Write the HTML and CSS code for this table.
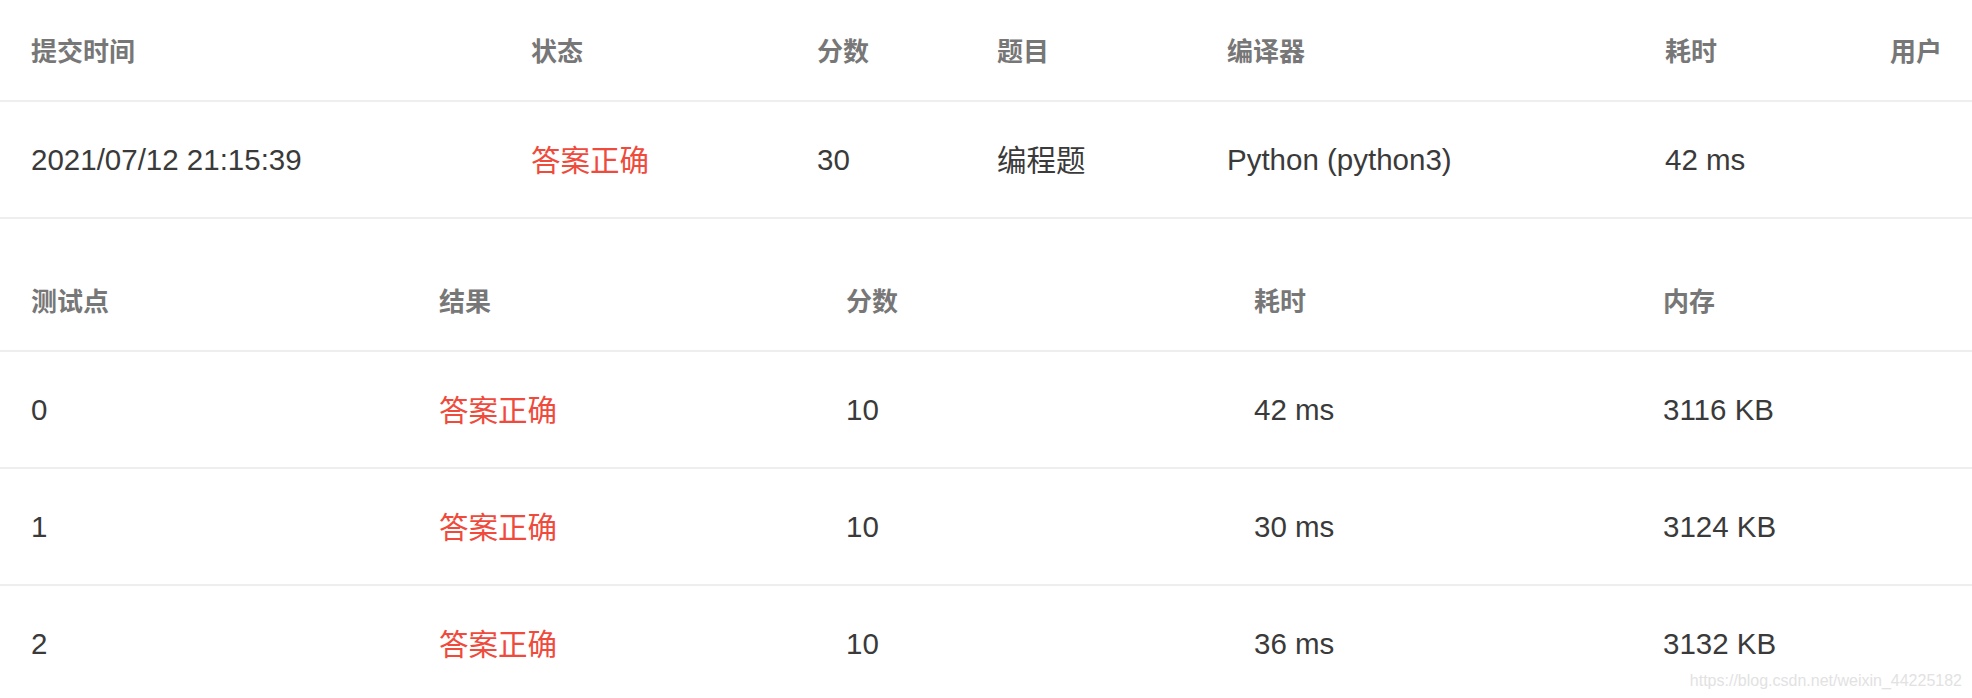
FILE: index.html
```html
<!DOCTYPE html>
<html lang="zh-CN">
<head>
<meta charset="utf-8">
<title>提交详情</title>
<link rel="stylesheet" href="styles.css">
</head>
<body>
<div class="page">
  <div class="table summary">
    <div class="row head">
      <div class="cell">提交时间</div>
      <div class="cell">状态</div>
      <div class="cell">分数</div>
      <div class="cell">题目</div>
      <div class="cell">编译器</div>
      <div class="cell">耗时</div>
      <div class="cell">用户</div>
    </div>
    <div class="row body">
      <div class="cell">2021/07/12 21:15:39</div>
      <div class="cell ok">答案正确</div>
      <div class="cell">30</div>
      <div class="cell cjk">编程题</div>
      <div class="cell">Python (python3)</div>
      <div class="cell">42 ms</div>
      <div class="cell"></div>
    </div>
  </div>

  <div class="table cases">
    <div class="row head">
      <div class="cell">测试点</div>
      <div class="cell">结果</div>
      <div class="cell">分数</div>
      <div class="cell">耗时</div>
      <div class="cell">内存</div>
    </div>
    <div class="row body">
      <div class="cell">0</div>
      <div class="cell ok">答案正确</div>
      <div class="cell">10</div>
      <div class="cell">42 ms</div>
      <div class="cell">3116 KB</div>
    </div>
    <div class="row body">
      <div class="cell">1</div>
      <div class="cell ok">答案正确</div>
      <div class="cell">10</div>
      <div class="cell">30 ms</div>
      <div class="cell">3124 KB</div>
    </div>
    <div class="row body">
      <div class="cell">2</div>
      <div class="cell ok">答案正确</div>
      <div class="cell">10</div>
      <div class="cell">36 ms</div>
      <div class="cell">3132 KB</div>
    </div>
  </div>

  <div class="watermark">https://blog.csdn.net/weixin_44225182</div>
</div>
</body>
</html>
```

FILE: styles.css
```css
html, body {
  margin: 0;
  padding: 0;
  background: #ffffff;
}

body {
  font-family: "Liberation Sans", "Noto Sans CJK SC", sans-serif;
  color: #333333;
}

.page {
  position: relative;
  width: 1972px;
  height: 698px;
  overflow: hidden;
}

.table {
  display: flex;
  flex-direction: column;
}

.row {
  display: grid;
  align-items: center;
  border-bottom: 2px solid #eeeeee;
}

.summary .row {
  grid-template-columns: 500px 286px 180px 230px 438px 225px 113px;
}

.cases {
  margin-top: 31px;
}

.cases .row {
  grid-template-columns: 408px 407px 408px 409px 340px;
}

.row.head {
  height: 100px;
}

.row.body {
  height: 115px;
}

.cell {
  padding-left: 31px;
  white-space: nowrap;
}

.head .cell {
  font-size: 26px;
  font-weight: 600;
  color: #777777;
  padding-bottom: 2px;
}

.body .cell {
  font-size: 29.5px;
  color: #3a3a3a;
}

.body .cell.ok,
.body .cell.cjk {
  padding-bottom: 4px;
}

.body .cell.ok {
  color: #ef4a3c;
}

.watermark {
  position: absolute;
  right: 10px;
  bottom: 8px;
  font-size: 16px;
  color: #e2e2e2;
}
```
